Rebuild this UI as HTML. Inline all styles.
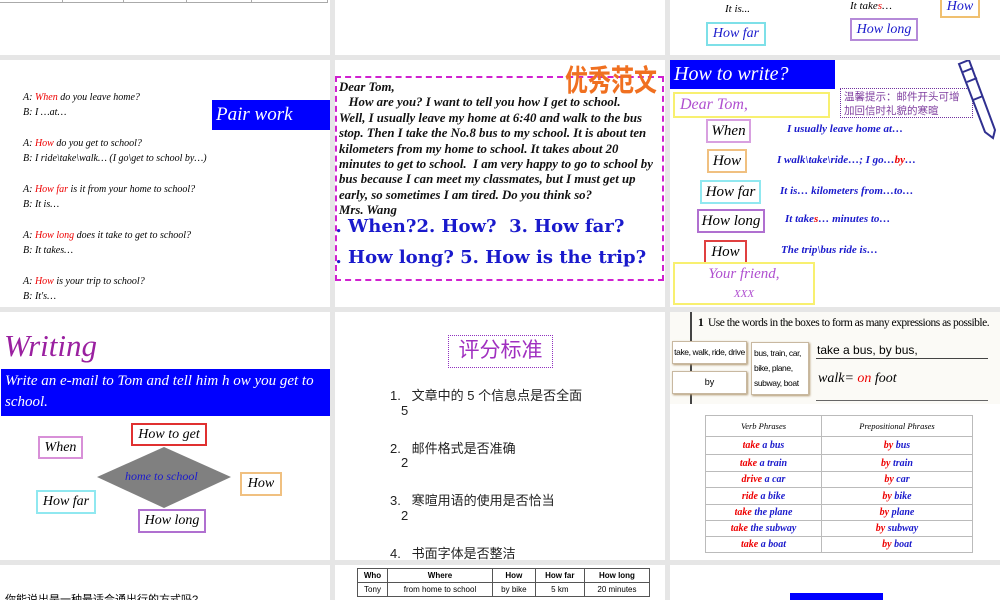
<!DOCTYPE html>
<html><head><meta charset="utf-8"><style>
*{margin:0;padding:0;box-sizing:border-box}
body{width:1000px;height:600px;background:#e6e6e6;position:relative;overflow:hidden;font-family:"Liberation Serif","Noto Serif CJK SC",serif}
.p{position:absolute;background:#fff;overflow:hidden}
.a{position:absolute;white-space:nowrap}
.i{font-style:italic}
.b{font-weight:bold}
.bx{position:absolute;border:2px solid;display:flex;align-items:center;justify-content:center;font-style:italic;white-space:nowrap}
.r{color:#e00}
.bl{color:#1a1acc}
.cn{font-family:"Liberation Sans","Noto Sans CJK SC",sans-serif}
</style></head><body>
<!-- row1 -->
<div class="p" style="left:0;top:0;width:330px;height:55px">
<div class="a" style="left:0;top:0;width:328px;height:3px;border-bottom:1px solid #aaa"></div>
<div class="a" style="left:62px;top:0;width:1px;height:3px;background:#aaa"></div>
<div class="a" style="left:123px;top:0;width:1px;height:3px;background:#aaa"></div>
<div class="a" style="left:186px;top:0;width:1px;height:3px;background:#aaa"></div>
<div class="a" style="left:251px;top:0;width:1px;height:3px;background:#aaa"></div>
<div class="a" style="left:327px;top:0;width:1px;height:3px;background:#aaa"></div>
</div>
<div class="p" style="left:335px;top:0;width:330px;height:55px"></div>
<div class="p" style="left:670px;top:0;width:330px;height:55px">
<div class="a i" style="left:55px;top:3px;font-size:11px">It is...</div>
<div class="bx bl" style="left:36px;top:22px;width:60px;height:24px;border-color:#7ee0e8;font-size:14px">How far</div>
<div class="a i" style="left:180px;top:0px;font-size:11px">It take<span class="r">s</span>…</div>
<div class="bx bl" style="left:180px;top:18px;width:68px;height:23px;border-color:#b58ad8;font-size:14px">How long</div>
<div class="bx bl" style="left:270px;top:-4px;width:40px;height:22px;border-color:#f0c070;font-size:14px">How</div>
</div>
<!-- row2 -->
<div class="p i" style="left:0;top:60px;width:330px;height:247px;font-size:10px;line-height:15px">
<div class="a" style="left:23px;top:30px">A: <span class="r">When</span> do you leave home?<br>B: I …at…</div>
<div class="a" style="left:23px;top:76px">A: <span class="r">How</span> do you get to school?<br>B: I ride\take\walk… (I go\get to school by…)</div>
<div class="a" style="left:23px;top:122px">A: <span class="r">How far</span> is it from your home to school?<br>B: It is…</div>
<div class="a" style="left:23px;top:168px">A: <span class="r">How long</span> does it take to get to school?<br>B: It takes…</div>
<div class="a" style="left:23px;top:214px">A: <span class="r">How</span> is your trip to school?<br>B: It's…</div>
<div class="a" style="left:212px;top:40px;width:118px;height:30px;background:#00f;color:#fff;font-size:19px;line-height:30px;padding-left:4px">Pair work</div>
</div>
<div class="p" style="left:335px;top:60px;width:330px;height:247px">
<div class="a" style="left:0;top:16px;width:329px;height:205px;border:2px dashed #d020d0"></div>
<div class="a b i" style="left:4px;top:20px;font-size:12.8px;line-height:15.4px;color:#111">Dear Tom,<br>&nbsp;&nbsp;&nbsp;How are you? I want to tell you how I get to school.<br>Well, I usually leave my home at 6:40 and walk to the bus<br>stop. Then I take the No.8 bus to my school. It is about ten<br>kilometers from my home to school. It takes about 20<br>minutes to get to school. &nbsp;I am very happy to go to school by<br>bus because I can meet my classmates, but I must get up<br>early, so sometimes I am tired. Do you think so?<br>Mrs. Wang</div>
<div class="a b" style="left:-12px;top:156px;font-size:18px;color:#1a1acc;font-family:'DejaVu Serif',serif">1. When?2. How? &nbsp;3. How far?</div>
<div class="a b" style="left:-12px;top:187px;font-size:18px;color:#1a1acc;font-family:'DejaVu Serif',serif">4. How long? 5. How is the trip?</div>
<div class="a cn b" style="left:230px;top:-4px;font-size:23px;color:#f07020;transform:scaleY(1.3);transform-origin:top left">优秀范文</div>
</div>
<div class="p" style="left:670px;top:60px;width:330px;height:247px">
<div class="a i" style="left:0;top:0;width:165px;height:29px;background:#00f;color:#fff;font-size:20px;line-height:29px;padding-left:4px">How to write?</div>
<div class="bx" style="left:3px;top:32px;width:157px;height:26px;border-color:#f8f070;color:#b050d0;font-size:16px;justify-content:flex-start;padding-left:5px">Dear Tom,</div>
<div class="a cn" style="left:170px;top:28px;width:133px;height:30px;border:1.5px dotted #7030a0;color:#8040a0;font-size:10.5px;line-height:14px;padding:1px 3px">温馨提示：邮件开头可增<br>加回信时礼貌的寒暄</div>
<svg class="a" style="left:285px;top:0" width="45" height="80"><path d="M4 4 L14 0 L40 70 L38 78 L30 72 Z" fill="#fff" stroke="#303090" stroke-width="2"/><path d="M8 12 L18 8 M12 22 L22 18 M18 40 L28 36" stroke="#303090" stroke-width="2"/></svg>
<div class="bx" style="left:36px;top:59px;width:45px;height:24px;border-color:#d8a0e0;font-size:15px">When</div>
<div class="a i bl b" style="left:117px;top:63px;font-size:11px">I usually leave home at…</div>
<div class="bx" style="left:37px;top:89px;width:40px;height:24px;border-color:#f0c080;font-size:15px">How</div>
<div class="a i bl b" style="left:107px;top:94px;font-size:11px">I walk\take\ride…; I go…<span class="r">by</span>…</div>
<div class="bx" style="left:30px;top:120px;width:61px;height:24px;border-color:#90e8f0;font-size:15px">How far</div>
<div class="a i bl b" style="left:110px;top:125px;font-size:11px">It is… kilometers from…to…</div>
<div class="bx" style="left:27px;top:149px;width:68px;height:24px;border-color:#b070d0;font-size:15px">How long</div>
<div class="a i bl b" style="left:115px;top:153px;font-size:11px">It take<span class="r">s</span>… minutes to…</div>
<div class="bx" style="left:34px;top:180px;width:43px;height:24px;border-color:#e04040;font-size:15px">How</div>
<div class="a i bl b" style="left:111px;top:184px;font-size:11px">The trip\bus ride is…</div>
<div class="bx" style="left:3px;top:202px;width:142px;height:43px;border-color:#f8f070;color:#b050d0;font-size:15px;flex-direction:column;line-height:20px">Your friend,<span style="font-size:11px">XXX</span></div>
</div>
<!-- row3 -->
<div class="p" style="left:0;top:312px;width:330px;height:248px">
<div class="a i" style="left:4px;top:16px;font-size:31px;color:#9a20a0">Writing</div>
<div class="a i" style="left:1px;top:57px;width:329px;height:47px;background:#00f;color:#fff;font-size:15px;line-height:21px;padding:2px 4px;white-space:normal">Write an e-mail to Tom and tell him h ow you get to school.</div>
<div class="bx" style="left:38px;top:124px;width:45px;height:23px;border-color:#d890d8;font-size:14px">When</div>
<div class="bx" style="left:131px;top:111px;width:76px;height:23px;border-color:#e03030;font-size:14px">How to get</div>
<svg class="a" style="left:97px;top:135px" width="134" height="62"><polygon points="67,0 134,30 67,61 0,30" fill="#808080"/></svg>
<div class="a i bl" style="left:125px;top:157px;font-size:12px">home to school</div>
<div class="bx" style="left:240px;top:160px;width:42px;height:24px;border-color:#f0c080;font-size:14px">How</div>
<div class="bx" style="left:36px;top:178px;width:60px;height:24px;border-color:#90e8f0;font-size:14px">How far</div>
<div class="bx" style="left:138px;top:197px;width:68px;height:24px;border-color:#b070d0;font-size:14px">How long</div>
</div>
<div class="p cn" style="left:335px;top:312px;width:330px;height:248px;font-size:13px;color:#222">
<div class="a" style="left:113px;top:23px;width:105px;height:33px;border:1.5px dotted #9030c0;color:#a030c0;font-size:21px;line-height:30px;text-align:center">评分标准</div>
<div class="a" style="left:55px;top:73px">1.&nbsp;&nbsp;&nbsp;文章中的 5 个信息点是否全面</div><div class="a" style="left:66px;top:91px">5</div>
<div class="a" style="left:55px;top:126px">2.&nbsp;&nbsp;&nbsp;邮件格式是否准确</div><div class="a" style="left:66px;top:143px">2</div>
<div class="a" style="left:55px;top:178px">3.&nbsp;&nbsp;&nbsp;寒暄用语的使用是否恰当</div><div class="a" style="left:66px;top:196px">2</div>
<div class="a" style="left:55px;top:231px">4.&nbsp;&nbsp;&nbsp;书面字体是否整洁</div>
</div>
<div class="p" style="left:670px;top:312px;width:330px;height:248px">
<div class="a" style="left:0;top:0;width:330px;height:92px;background:#fbfaf6"></div>
<div class="a" style="left:20px;top:0;width:2px;height:92px;background:#444"></div>
<div class="a b" style="left:28px;top:5px;font-size:11.5px;letter-spacing:-0.5px">1&nbsp; <span style="font-weight:normal">Use the words in the boxes to form as many expressions as possible.</span></div>
<div class="a cn" style="left:2px;top:29px;width:75px;height:23px;border:1px solid #c8b8a0;background:#fff;font-size:8.5px;letter-spacing:-0.4px;line-height:21px;text-align:center;box-shadow:1px 1px 2px #b09870">take, walk, ride, drive</div>
<div class="a cn" style="left:2px;top:59px;width:75px;height:23px;border:1px solid #c8b8a0;background:#fff;font-size:9px;line-height:21px;text-align:center;box-shadow:1px 1px 2px #b09870">by</div>
<div class="a cn" style="left:81px;top:30px;width:58px;height:53px;border:1px solid #c8b8a0;background:#fff;font-size:8.5px;letter-spacing:-0.4px;line-height:15px;padding:3px 2px;box-shadow:1px 1px 2px #b09870">bus, train, car,<br>bike, plane,<br>subway, boat</div>
<div class="a cn" style="left:147px;top:31px;font-size:12px">take a bus, by bus,</div>
<div class="a" style="left:146px;top:46px;width:172px;height:1px;background:#444"></div>
<div class="a i" style="left:148px;top:59px;font-size:14px">walk= <span class="r">on</span> foot</div>
<div class="a" style="left:146px;top:88px;width:172px;height:1px;background:#666"></div>
<table class="a i" style="left:35px;top:103px;width:268px;border-collapse:collapse;font-size:10px;text-align:center">
<tr style="height:21px"><td style="border:1px solid #bbb;width:116px;font-size:8.5px">Verb Phrases</td><td style="border:1px solid #bbb;font-size:8.5px">Prepositional Phrases</td></tr>
<tr style="height:18px"><td style="border:1px solid #bbb" class="b"><span class="r">take</span> <span class="bl">a bus</span></td><td style="border:1px solid #bbb" class="b"><span class="r">by</span> <span class="bl">bus</span></td></tr>
<tr style="height:17px"><td style="border:1px solid #bbb" class="b"><span class="r">take</span> <span class="bl">a train</span></td><td style="border:1px solid #bbb" class="b"><span class="r">by</span> <span class="bl">train</span></td></tr>
<tr style="height:16px"><td style="border:1px solid #bbb" class="b"><span class="r">drive</span> <span class="bl">a car</span></td><td style="border:1px solid #bbb" class="b"><span class="r">by</span> <span class="bl">car</span></td></tr>
<tr style="height:17px"><td style="border:1px solid #bbb" class="b"><span class="r">ride</span> <span class="bl">a bike</span></td><td style="border:1px solid #bbb" class="b"><span class="r">by</span> <span class="bl">bike</span></td></tr>
<tr style="height:16px"><td style="border:1px solid #bbb" class="b"><span class="r">take</span> <span class="bl">the plane</span></td><td style="border:1px solid #bbb" class="b"><span class="r">by</span> <span class="bl">plane</span></td></tr>
<tr style="height:16px"><td style="border:1px solid #bbb" class="b"><span class="r">take</span> <span class="bl">the subway</span></td><td style="border:1px solid #bbb" class="b"><span class="r">by</span> <span class="bl">subway</span></td></tr>
<tr style="height:16px"><td style="border:1px solid #bbb" class="b"><span class="r">take</span> <span class="bl">a boat</span></td><td style="border:1px solid #bbb" class="b"><span class="r">by</span> <span class="bl">boat</span></td></tr>
</table>
</div>
<!-- row4 -->
<div class="p" style="left:0;top:565px;width:330px;height:35px">
<div class="a cn" style="left:5px;top:26px;font-size:11px">你能说出是一种最适合通出行的方式吗?</div>
</div>
<div class="p" style="left:335px;top:565px;width:330px;height:35px">
<table class="a cn" style="left:22px;top:3px;width:293px;border-collapse:collapse;font-size:8px;text-align:center;border:1.5px solid #333">
<tr style="height:14px" class="b"><td style="border:1px solid #555;width:30px">Who</td><td style="border:1px solid #555;width:105px">Where</td><td style="border:1px solid #555">How</td><td style="border:1px solid #555">How far</td><td style="border:1px solid #555">How long</td></tr>
<tr style="height:14px"><td style="border:1px solid #555">Tony</td><td style="border:1px solid #555">from home to school</td><td style="border:1px solid #555">by bike</td><td style="border:1px solid #555">5 km</td><td style="border:1px solid #555">20 minutes</td></tr>
</table>
</div>
<div class="p" style="left:670px;top:565px;width:330px;height:35px">
<div class="a" style="left:120px;top:28px;width:93px;height:7px;background:#00f"></div>
</div>
</body></html>
